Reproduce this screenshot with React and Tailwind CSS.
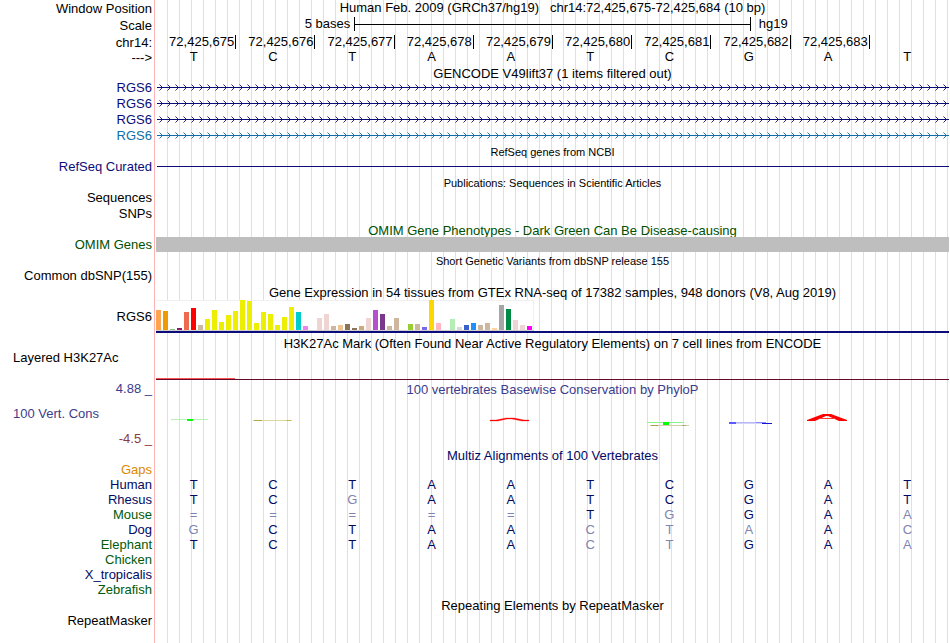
import React from 'react';

const BASES = ['T', 'C', 'T', 'A', 'A', 'T', 'C', 'G', 'A', 'T'];

const POSITIONS = [
    '72,425,675', '72,425,676', '72,425,677', '72,425,678', '72,425,679',
    '72,425,680', '72,425,681', '72,425,682', '72,425,683',
];

const GENES = [
    { id: 1, className: 'text-[#0c0c78]' },
    { id: 2, className: 'text-[#0c0c78]' },
    { id: 3, className: 'text-[#0c0c78]' },
    { id: 4, className: 'text-[#0f6ea8]' },
];

// [height, color] per tissue
const TISSUES = [
    [20, '#ffa54f'], [19, '#ee9a00'], [1, '#8fbc8f'], [2, '#8b1c62'], [18, '#ee6a50'], [22, '#ff0000'],
    [5, '#cdb79e'], [11, '#eeee00'], [20, '#eeee00'], [8, '#eeee00'], [15, '#eeee00'], [19, '#eeee00'],
    [30, '#eeee00'], [29, '#eeee00'], [7, '#eeee00'], [18, '#eeee00'], [16, '#eeee00'], [5, '#eeee00'],
    [13, '#eeee00'], [23, '#eeee00'], [18, '#00cdcd'], [4, '#ee82ee'], [0, '#9ac0cd'], [12, '#eed5d2'],
    [16, '#eed5d2'], [4, '#cdb79e'], [5, '#eec591'], [6, '#8b7355'], [2, '#8b7355'], [4, '#cdaa7d'],
    [12, '#eed5d2'], [20, '#b452cd'], [16, '#7a378b'], [4, '#cdb79e'], [12, '#cdb79e'], [0, '#cdb79e'],
    [6, '#9acd32'], [6, '#cdb79e'], [3, '#7a67ee'], [30, '#ffd700'], [7, '#ffb6c1'], [0, '#cd9b1d'],
    [11, '#b4eeb4'], [3, '#d9d9d9'], [5, '#3a5fcd'], [7, '#1e90ff'], [5, '#cdb79e'], [7, '#cdb79e'],
    [2, '#ffd39b'], [25, '#a6a6a6'], [21, '#008b45'], [10, '#eed5d2'], [5, '#eed5d2'], [4, '#ff00ff'],
];

// lower case marks a base that differs from human
const SPECIES = [
    { name: 'Gaps', className: 'text-[#dd8800]', seq: '' },
    { name: 'Human', className: 'text-[#000a64]', seq: 'TCTAATCGAT' },
    { name: 'Rhesus', className: 'text-[#000a64]', seq: 'TCgAATCGAT' },
    { name: 'Mouse', className: 'text-[#005a0a]', seq: '=====TgGAa' },
    { name: 'Dog', className: 'text-[#000a64]', seq: 'gCTAActaAc' },
    { name: 'Elephant', className: 'text-[#005a0a]', seq: 'TCTAActGAa' },
    { name: 'Chicken', className: 'text-[#005a0a]', seq: '' },
    { name: 'X_tropicalis', className: 'text-[#000a64]', seq: '' },
    { name: 'Zebrafish', className: 'text-[#005a0a]', seq: '' },
];

const Row = ({ label, labelClass = '', className = 'h-4', children }) => (
    <div className={`flex ${className}`}>
        <div className={`w-[154px] shrink-0 flex items-center justify-end pt-0.5 pr-0.5 whitespace-nowrap ${labelClass}`}>
            {label}
        </div>
        <div className="ml-0.5 flex-1 min-w-0">{children}</div>
    </div>
);

const Title = ({ children, className = 'leading-[10px]' }) => (
    <h2 className={`ml-[156px] h-[15px] flex items-end justify-center whitespace-nowrap ${className}`}>
        {children}
    </h2>
);

const GeneArrows = ({ id }) => (
    <svg className="block w-full h-4" aria-hidden="true">
        <defs>
            <pattern id={`arrows-${id}`} x="3" width="8" height="16" patternUnits="userSpaceOnUse">
                <path d="M0.5 5.5L3.5 8.5L0.5 11.5" fill="none" stroke="currentColor" strokeWidth="0.9" />
            </pattern>
        </defs>
        <rect x="3" width="100%" height="16" fill={`url(#arrows-${id})`} />
        <rect x="1" y="8" width="100%" height="1" fill="currentColor" />
    </svg>
);

const ExpressionChart = () => (
    <svg className="block w-full h-9" aria-hidden="true">
        <rect x="0" y="2" width="378" height="31" fill="#f0f0f0" />
        <rect x="0" y="3" width="377" height="29" fill="#fff" />
        <rect x="0" y="32" width="378" height="1" fill="#cfcfcf" />
        {TISSUES.map(([height, color], i) => (
            <rect key={i} x={i * 7} y={32 - height} width="5" height={height} fill={color} />
        ))}
        <rect x="0" y="33" width="100%" height="2" fill="#0c0c78" />
    </svg>
);

const ConservationPlot = () => (
    <svg className="block w-full h-[51px]" viewBox="0 0 793 51" preserveAspectRatio="none" aria-hidden="true">
        <rect x="15" y="23" width="37" height="1" fill="#b4f5b4" />
        <rect x="31" y="23" width="6" height="2" fill="#00ff00" />
        <rect x="97" y="24" width="39" height="1" fill="#dcd8a0" />
        <rect x="98" y="24" width="8" height="1" fill="#b4aa3c" />
        <rect x="130" y="24" width="5" height="1" fill="#c3b95a" />
        <path d="M334 24H340L350 22H358L368 24H373V25H366L356 23H351L342 25H334Z" fill="#ff0000" stroke="#ff0000" strokeWidth="0.3" />
        <rect x="491" y="26" width="37" height="1" fill="#8cf58c" />
        <rect x="507" y="26" width="6" height="3" fill="#00ff00" />
        <rect x="494" y="29" width="39" height="1" fill="#d2cdaa" />
        <rect x="495" y="29" width="7" height="1" fill="#aaa050" />
        <rect x="526" y="29" width="4" height="1" fill="#b4aa6e" />
        <rect x="573" y="26" width="7" height="2" fill="#5a5aff" />
        <rect x="580" y="26" width="29" height="1" fill="#b9b9fa" />
        <rect x="580" y="27" width="26" height="1" fill="#d2d2fa" />
        <rect x="600" y="26" width="10" height="1" fill="#8c8cff" />
        <rect x="606" y="27" width="10" height="1" fill="#1414d2" />
        <path d="M651 25V24L667 18H675L691 24V25H683L672 20H670L659 25Z" fill="#ff0000" />
        <rect x="663" y="22" width="16" height="1" fill="#ff3c3c" />
    </svg>
);

const AlignmentTable = () => (
    <table className="table-fixed w-full border-collapse">
        <tbody>
            {SPECIES.map(({ name, className, seq }) => (
                <tr key={name} className="h-[15px]">
                    <th scope="row" className={`w-[156px] p-0 pr-1 text-right font-normal leading-[15px] ${className}`}>
                        {name}
                    </th>
                    {BASES.map((_, i) => {
                        const base = seq[i] || '';
                        const matches = base !== '=' && base === base.toUpperCase();
                        return (
                            <td
                                key={i}
                                className={`p-0 pr-1 text-center leading-[15px] ${matches ? 'text-[#000a64]' : 'text-[#8084b1]'}`}
                            >
                                {base.toUpperCase()}
                            </td>
                        );
                    })}
                </tr>
            ))}
        </tbody>
    </table>
);

const App = () => (
    <div className="min-h-screen bg-white pr-px">
        <main className="min-h-screen text-[13px] leading-4 text-black font-['Liberation_Sans',Arial,sans-serif] bg-[linear-gradient(to_right,white_154px,#ffb4b4_154px,#ffb4b4_155px,white_155px,white_156px,transparent_156px),repeating-linear-gradient(to_right,transparent_0px,transparent_11px,#dcdcff_11px,#dcdcff_12px)]">
            <Row label="Window Position">
                <h1 className="text-center whitespace-pre">
                    {'Human Feb. 2009 (GRCh37/hg19)   chr14:72,425,675-72,425,684 (10 bp)'}
                </h1>
            </Row>
            <Row label="Scale" className="h-[18px]">
                <div className="grid grid-cols-4 h-4 items-center">
                    <span className="text-right pr-1">5 bases</span>
                    <div className="col-span-2 h-3.5 border-x border-black flex items-center">
                        <div className="h-px w-full bg-black" />
                    </div>
                    <span className="pl-2">hg19</span>
                </div>
            </Row>
            <Row label="chr14:">
                <div className="grid grid-cols-10 h-4 items-center ml-px">
                    {POSITIONS.map((position) => (
                        <span key={position} className="h-3.5 leading-[14px] pr-px text-right border-r border-black">
                            {position}
                        </span>
                    ))}
                </div>
            </Row>
            <Row label="--->" className="h-3.5">
                <div className="grid grid-cols-10 leading-[14px]">
                    {BASES.map((base, i) => (
                        <span key={i} className="text-center pr-1">{base}</span>
                    ))}
                </div>
            </Row>

            <Title>GENCODE V49lift37 (1 items filtered out)</Title>
            {GENES.map(({ id, className }) => (
                <div key={id} className={className}>
                    <Row label="RGS6">
                        <GeneArrows id={id} />
                    </Row>
                </div>
            ))}

            <Title className="text-[11px] leading-3">RefSeq genes from NCBI</Title>
            <Row label="RefSeq Curated" labelClass="text-[#0c0c78]">
                <div className="h-4 pt-2 pl-px">
                    <div className="h-px bg-[#0c0c78]" />
                </div>
            </Row>

            <Title className="text-[11px] leading-3">Publications: Sequences in Scientific Articles</Title>
            <Row label="Sequences" />
            <Row label="SNPs" />

            <Title className="leading-[10px] text-[#005000]">OMIM Gene Phenotypes - Dark Green Can Be Disease-causing</Title>
            <Row label="OMIM Genes" labelClass="text-[#005000]">
                <div className="h-4 pt-px">
                    <div className="h-[15px] bg-[#bebebe]" />
                </div>
            </Row>

            <Title className="text-[11px] leading-3">Short Genetic Variants from dbSNP release 155</Title>
            <Row label="Common dbSNP(155)" />

            <Title>Gene Expression in 54 tissues from GTEx RNA-seq of 17382 samples, 948 donors (V8, Aug 2019)</Title>
            <Row label="RGS6" className="h-9">
                <ExpressionChart />
            </Row>

            <Title>H3K27Ac Mark (Often Found Near Active Regulatory Elements) on 7 cell lines from ENCODE</Title>
            <div className="flex h-8">
                <div className="w-[156px] shrink-0 pt-px pl-[13px]">Layered H3K27Ac</div>
                <div className="flex-1 flex flex-col justify-end pb-px">
                    <div className="h-px w-1/10 bg-[#ff5050]" />
                    <div className="h-px bg-[#640a28]" />
                </div>
            </div>

            <div className="flex">
                <div className="w-[154px] shrink-0 flex flex-col justify-between pr-0.5 text-right text-[#3c3c8c]">
                    <div>4.88 _</div>
                    <div className="pl-[13px] text-left">100 Vert. Cons</div>
                    <div className="text-[#8c3c3c]">-4.5 _</div>
                </div>
                <div className="ml-0.5 flex-1 min-w-0">
                    <h2 className="h-[15px] flex items-end justify-center leading-3 text-[#3c3c8c]">
                        100 vertebrates Basewise Conservation by PhyloP
                    </h2>
                    <ConservationPlot />
                </div>
            </div>

            <Title className="leading-3 text-[#000a64]">Multiz Alignments of 100 Vertebrates</Title>
            <AlignmentTable />

            <Title className="leading-3">Repeating Elements by RepeatMasker</Title>
            <Row label="RepeatMasker" />
        </main>
    </div>
);

export default App;
